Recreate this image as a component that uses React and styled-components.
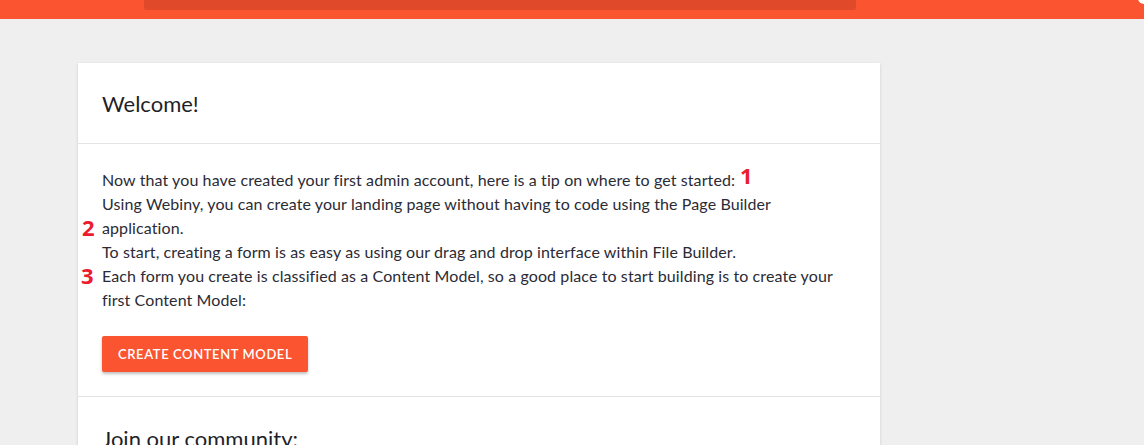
import React from 'react';
import styled, { createGlobalStyle } from 'styled-components';

const GlobalStyle = createGlobalStyle`
  html, body {
    margin: 0;
    padding: 0;
    background: #efefef;
    font-family: Lato, "Open Sans", sans-serif;
    color: #2b2b36;
  }
`;

const TopBar = styled.header`
  position: relative;
  height: 19px;
  background: #fa5430;
  display: flex;
  padding-left: 144px;
  overflow: hidden;

  &::after {
    content: '';
    position: absolute;
    right: -6px;
    top: -8px;
    width: 12px;
    height: 12px;
    border-radius: 50%;
    background: #ffffff;
  }
`;

const SearchBar = styled.div`
  width: 712px;
  height: 10px;
  background: #e04a2a;
  border-radius: 0 0 3px 3px;
`;

const Page = styled.main`
  padding: 44px 0 0 78px;
`;

const Card = styled.section`
  width: 802px;
  background: #ffffff;
  box-shadow: 0 1px 3px rgba(0, 0, 0, 0.14);
`;

const CardHeader = styled.div`
  height: 80px;
  padding: 0 24px;
  display: flex;
  align-items: center;
  border-bottom: 1px solid #e4e4e4;
`;

const Title = styled.h2`
  margin: 0;
  font-size: 22px;
  font-weight: 400;
  color: #1f1f29;
`;

const CardBody = styled.div`
  position: relative;
  padding: 24px 24px 24px;
  border-bottom: 1px solid #e4e4e4;
`;

const Line = styled.p`
  margin: 0;
  font-size: 16px;
  line-height: 24px;
  letter-spacing: 0.1px;
  width: 740px;
`;

const Marker = styled.span`
  position: absolute;
  font-family: "Open Sans", sans-serif;
  font-weight: 700;
  font-size: 22px;
  line-height: 1;
  color: #ea1c2d;
  left: ${(p) => p.x}px;
  top: ${(p) => p.y}px;
`;

const Button = styled.button`
  margin-top: 24px;
  height: 36px;
  padding: 0 16px;
  border: none;
  border-radius: 2px;
  background: #fa5430;
  color: #ffffff;
  font-family: Lato, sans-serif;
  font-size: 13px;
  font-weight: 600;
  letter-spacing: 0.6px;
  text-transform: uppercase;
  box-shadow: 0 2px 3px rgba(0, 0, 0, 0.25);
  cursor: pointer;
`;

const Section = styled.div`
  padding: 28px 24px 0;
  min-height: 100px;
`;

const SectionTitle = styled.h3`
  margin: 0;
  font-size: 22px;
  font-weight: 400;
  color: #1f1f29;
`;

export default function App() {
  return (
    <>
      <GlobalStyle />
      <TopBar>
        <SearchBar />
      </TopBar>
      <Page>
        <Card>
          <CardHeader>
            <Title>Welcome!</Title>
          </CardHeader>
          <CardBody>
            <Line>Now that you have created your first admin account, here is a tip on where to get started:</Line>
            <Line>Using Webiny, you can create your landing page without having to code using the Page Builder application.</Line>
            <Line>To start, creating a form is as easy as using our drag and drop interface within File Builder.</Line>
            <Line>Each form you create is classified as a Content Model, so a good place to start building is to create your first Content Model:</Line>
            <Button>Create Content Model</Button>
            <Marker x={662} y={20}>1</Marker>
            <Marker x={4} y={72}>2</Marker>
            <Marker x={3} y={120}>3</Marker>
          </CardBody>
          <Section>
            <SectionTitle>Join our community:</SectionTitle>
          </Section>
        </Card>
      </Page>
    </>
  );
}
